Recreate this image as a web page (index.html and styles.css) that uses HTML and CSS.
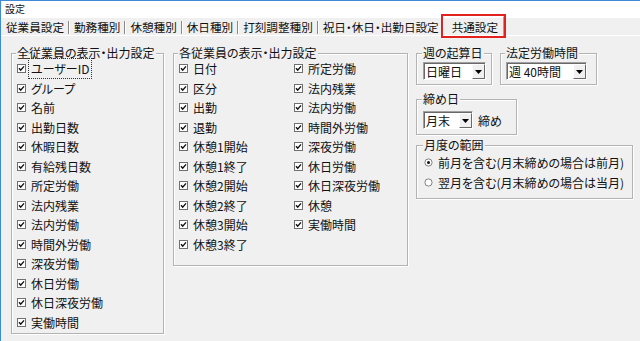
FILE: index.html
```html
<!DOCTYPE html>
<html lang="ja">
<head>
<meta charset="utf-8">
<title>設定</title>
<link rel="stylesheet" href="styles.css">
</head>
<body>
<svg class="defs" width="0" height="0" aria-hidden="true">
  <symbol id="cb" viewBox="0 0 9 9">
    <rect x="0.5" y="0.5" width="8" height="8" fill="#fff" stroke="#707070"/>
    <path d="M2 4.3 3.7 6.1 7 2.4" fill="none" stroke="#111" stroke-width="1.4"/>
  </symbol>
  <symbol id="rb-on" viewBox="0 0 9 9">
    <circle cx="4.5" cy="4.5" r="3.6" fill="#fff" stroke="#808080"/>
    <circle cx="4.5" cy="4.5" r="1.5" fill="#111"/>
  </symbol>
  <symbol id="rb-off" viewBox="0 0 9 9">
    <circle cx="4.5" cy="4.5" r="3.6" fill="#fff" stroke="#808080"/>
  </symbol>
  <symbol id="arrow" viewBox="0 0 7 4">
    <path d="M0 0h7L3.5 4z" fill="#000"/>
  </symbol>
</svg>
<div class="window">
  <div class="titlebar">設定</div>
  <div class="tabs">
    <span class="tab first">従業員設定</span>
    <span class="tab">勤務種別</span>
    <span class="tab">休憩種別</span>
    <span class="tab">休日種別</span>
    <span class="tab">打刻調整種別</span>
    <span class="tab">祝日・休日・出勤日設定</span>
    <span class="tab active">共通設定</span>
  </div>
  <div class="panel">
    <fieldset class="group g-all">
      <legend>全従業員の表示・出力設定</legend>
      <div class="list">
        <label class="chk"><svg class="box"><use href="#cb"/></svg><span class="focus">ユーザーID</span></label>
        <label class="chk"><svg class="box"><use href="#cb"/></svg><span>グループ</span></label>
        <label class="chk"><svg class="box"><use href="#cb"/></svg><span>名前</span></label>
        <label class="chk"><svg class="box"><use href="#cb"/></svg><span>出勤日数</span></label>
        <label class="chk"><svg class="box"><use href="#cb"/></svg><span>休暇日数</span></label>
        <label class="chk"><svg class="box"><use href="#cb"/></svg><span>有給残日数</span></label>
        <label class="chk"><svg class="box"><use href="#cb"/></svg><span>所定労働</span></label>
        <label class="chk"><svg class="box"><use href="#cb"/></svg><span>法内残業</span></label>
        <label class="chk"><svg class="box"><use href="#cb"/></svg><span>法内労働</span></label>
        <label class="chk"><svg class="box"><use href="#cb"/></svg><span>時間外労働</span></label>
        <label class="chk"><svg class="box"><use href="#cb"/></svg><span>深夜労働</span></label>
        <label class="chk"><svg class="box"><use href="#cb"/></svg><span>休日労働</span></label>
        <label class="chk"><svg class="box"><use href="#cb"/></svg><span>休日深夜労働</span></label>
        <label class="chk"><svg class="box"><use href="#cb"/></svg><span>実働時間</span></label>
      </div>
    </fieldset>
    <fieldset class="group g-each">
      <legend>各従業員の表示・出力設定</legend>
      <div class="grid">
        <label class="chk"><svg class="box"><use href="#cb"/></svg><span>日付</span></label>
        <label class="chk"><svg class="box"><use href="#cb"/></svg><span>区分</span></label>
        <label class="chk"><svg class="box"><use href="#cb"/></svg><span>出勤</span></label>
        <label class="chk"><svg class="box"><use href="#cb"/></svg><span>退勤</span></label>
        <label class="chk"><svg class="box"><use href="#cb"/></svg><span>休憩1開始</span></label>
        <label class="chk"><svg class="box"><use href="#cb"/></svg><span>休憩1終了</span></label>
        <label class="chk"><svg class="box"><use href="#cb"/></svg><span>休憩2開始</span></label>
        <label class="chk"><svg class="box"><use href="#cb"/></svg><span>休憩2終了</span></label>
        <label class="chk"><svg class="box"><use href="#cb"/></svg><span>休憩3開始</span></label>
        <label class="chk"><svg class="box"><use href="#cb"/></svg><span>休憩3終了</span></label>
        <label class="chk"><svg class="box"><use href="#cb"/></svg><span>所定労働</span></label>
        <label class="chk"><svg class="box"><use href="#cb"/></svg><span>法内残業</span></label>
        <label class="chk"><svg class="box"><use href="#cb"/></svg><span>法内労働</span></label>
        <label class="chk"><svg class="box"><use href="#cb"/></svg><span>時間外労働</span></label>
        <label class="chk"><svg class="box"><use href="#cb"/></svg><span>深夜労働</span></label>
        <label class="chk"><svg class="box"><use href="#cb"/></svg><span>休日労働</span></label>
        <label class="chk"><svg class="box"><use href="#cb"/></svg><span>休日深夜労働</span></label>
        <label class="chk"><svg class="box"><use href="#cb"/></svg><span>休憩</span></label>
        <label class="chk"><svg class="box"><use href="#cb"/></svg><span>実働時間</span></label>
      </div>
    </fieldset>
    <div class="side">
      <div class="row">
        <fieldset class="group g-week">
          <legend>週の起算日</legend>
          <div class="combo c-week"><span class="val">日曜日</span><span class="btn"><svg class="arr"><use href="#arrow"/></svg></span></div>
        </fieldset>
        <fieldset class="group g-legal">
          <legend>法定労働時間</legend>
          <div class="combo c-legal"><span class="val">週 40時間</span><span class="btn"><svg class="arr"><use href="#arrow"/></svg></span></div>
        </fieldset>
      </div>
      <fieldset class="group g-close">
        <legend>締め日</legend>
        <div class="inline">
          <div class="combo c-close"><span class="val">月末</span><span class="btn"><svg class="arr"><use href="#arrow"/></svg></span></div>
          <span class="suffix">締め</span>
        </div>
      </fieldset>
      <fieldset class="group g-range">
        <legend>月度の範囲</legend>
        <label class="radio"><svg class="rb"><use href="#rb-on"/></svg><span>前月を含む(月末締めの場合は前月)</span></label>
        <label class="radio"><svg class="rb"><use href="#rb-off"/></svg><span>翌月を含む(月末締めの場合は当月)</span></label>
      </fieldset>
    </div>
  </div>
</div>
</body>
</html>
```
FILE: styles.css
```css
* { box-sizing: border-box; }
html, body { margin: 0; padding: 0; }
body {
  width: 640px;
  height: 341px;
  overflow: hidden;
  background: #f0f0f0;
  font-family: "Noto Sans CJK JP", "Noto Sans", sans-serif;
  font-size: 12px;
  color: #111;
  font-feature-settings: "palt";
}
.defs { position: absolute; width: 0; height: 0; }
.window {
  height: 341px;
  border-top: 1px solid #3d8ad6;
  border-left: 1px solid #3d8ad6;
  background: #f0f0f0;
}
.titlebar {
  height: 17px;
  background: #fff;
  font-size: 10px;
  line-height: 16px;
  padding-left: 4px;
}
.tabs {
  display: flex;
  height: 18px;
  padding-left: 1px;
  border-bottom: 1px solid #fff;
  background: #f0f0f0;
}
.tab {
  position: relative;
  padding: 0 4px 0 6px;
  line-height: 18px;
  font-size: 11.6px;
  white-space: nowrap;
}
.tab.first { padding-left: 4px; }
.tab + .tab::before {
  content: "";
  position: absolute;
  left: 0;
  top: 3px;
  bottom: 1px;
  border-left: 1px solid #8a8a8a;
  box-shadow: 1px 0 0 #fff;
}
.tab.active {
  margin-left: 0;
  margin-top: -2px;
  height: 20px;
  line-height: 20px;
  padding: 0 5px 0 8px;
  border-left: 1px solid #fff;
  border-top: 1px solid #fff;
  border-right: 1px solid #a0a0a0;
  outline: 2px solid #e3211f;
  outline-offset: 0;
}
.tab.active::before { display: none; }

.panel {
  display: flex;
  align-items: flex-start;
  padding: 11px 0 0 10px;
}
.group {
  margin: 0;
  padding: 0 5px;
  border: 1px solid #b3b3b3;
  box-shadow: inset 1px 1px 0 #fff, 1px 1px 0 #fff;
  min-width: 0;
}
.group legend {
  padding: 0 1px;
  margin-left: -1px;
  line-height: 12px;
  height: 12px;
  font-size: 12px;
  background: #f0f0f0;
  white-space: nowrap;
}
.g-all { width: 153px; padding-bottom: 1px; }
.g-each { width: 235px; margin-left: 9px; padding-bottom: 11px; }
.list { display: flex; flex-direction: column; }
.grid {
  display: grid;
  grid-template-columns: 115px 1fr;
  grid-template-rows: repeat(10, 19.5px);
  grid-auto-flow: column;
}
.chk {
  display: flex;
  align-items: center;
  gap: 5px;
  height: 19.5px;
  white-space: nowrap;
}
.box { width: 9px; height: 9px; flex: none; }
.focus {
  outline: 1px dotted #333;
  outline-offset: 1px;
  padding: 0 1px;
  margin-left: -1px;
}

.side { margin-left: 8px; display: flex; flex-direction: column; }
.row { display: flex; gap: 8px; }
.g-week { width: 76px; padding: 0 5px 4px 6px; }
.g-legal { width: 97px; padding: 0 5px 4px 5px; }
.g-close { width: 101px; margin-top: 8px; padding: 0 5px 5px 6px; }
.g-range { width: 217px; margin-top: 4px; padding: 2px 5px 6px 7px; }

.combo {
  display: flex;
  height: 18px;
  background: #fff;
  border: 1px solid;
  border-color: #a0a0a0 #fff #fff #a0a0a0;
  box-shadow: inset 1px 1px 0 #696969;
}
.c-week { width: 63px; margin-top: 3px; }
.c-legal { width: 81px; margin-top: 3px; }
.c-close { width: 50px; }
.inline { display: flex; align-items: center; gap: 5px; margin-top: 6px; }
.val {
  flex: 1;
  padding-left: 2px;
  padding-top: 1px;
  line-height: 15px;
  white-space: nowrap;
}
.btn {
  width: 13px;
  margin: 1px 0 0 0;
  background: #f0f0f0;
  border-left: 1px solid #fff;
  border-top: 1px solid #fff;
  border-right: 1px solid #696969;
  border-bottom: 1px solid #696969;
  display: flex;
  align-items: center;
  justify-content: center;
}
.arr { width: 7px; height: 4px; }
.suffix { white-space: nowrap; }

.radio {
  display: flex;
  align-items: center;
  gap: 5px;
  height: 19.5px;
  white-space: nowrap;
}
.rb { width: 9px; height: 9px; flex: none; }
```
